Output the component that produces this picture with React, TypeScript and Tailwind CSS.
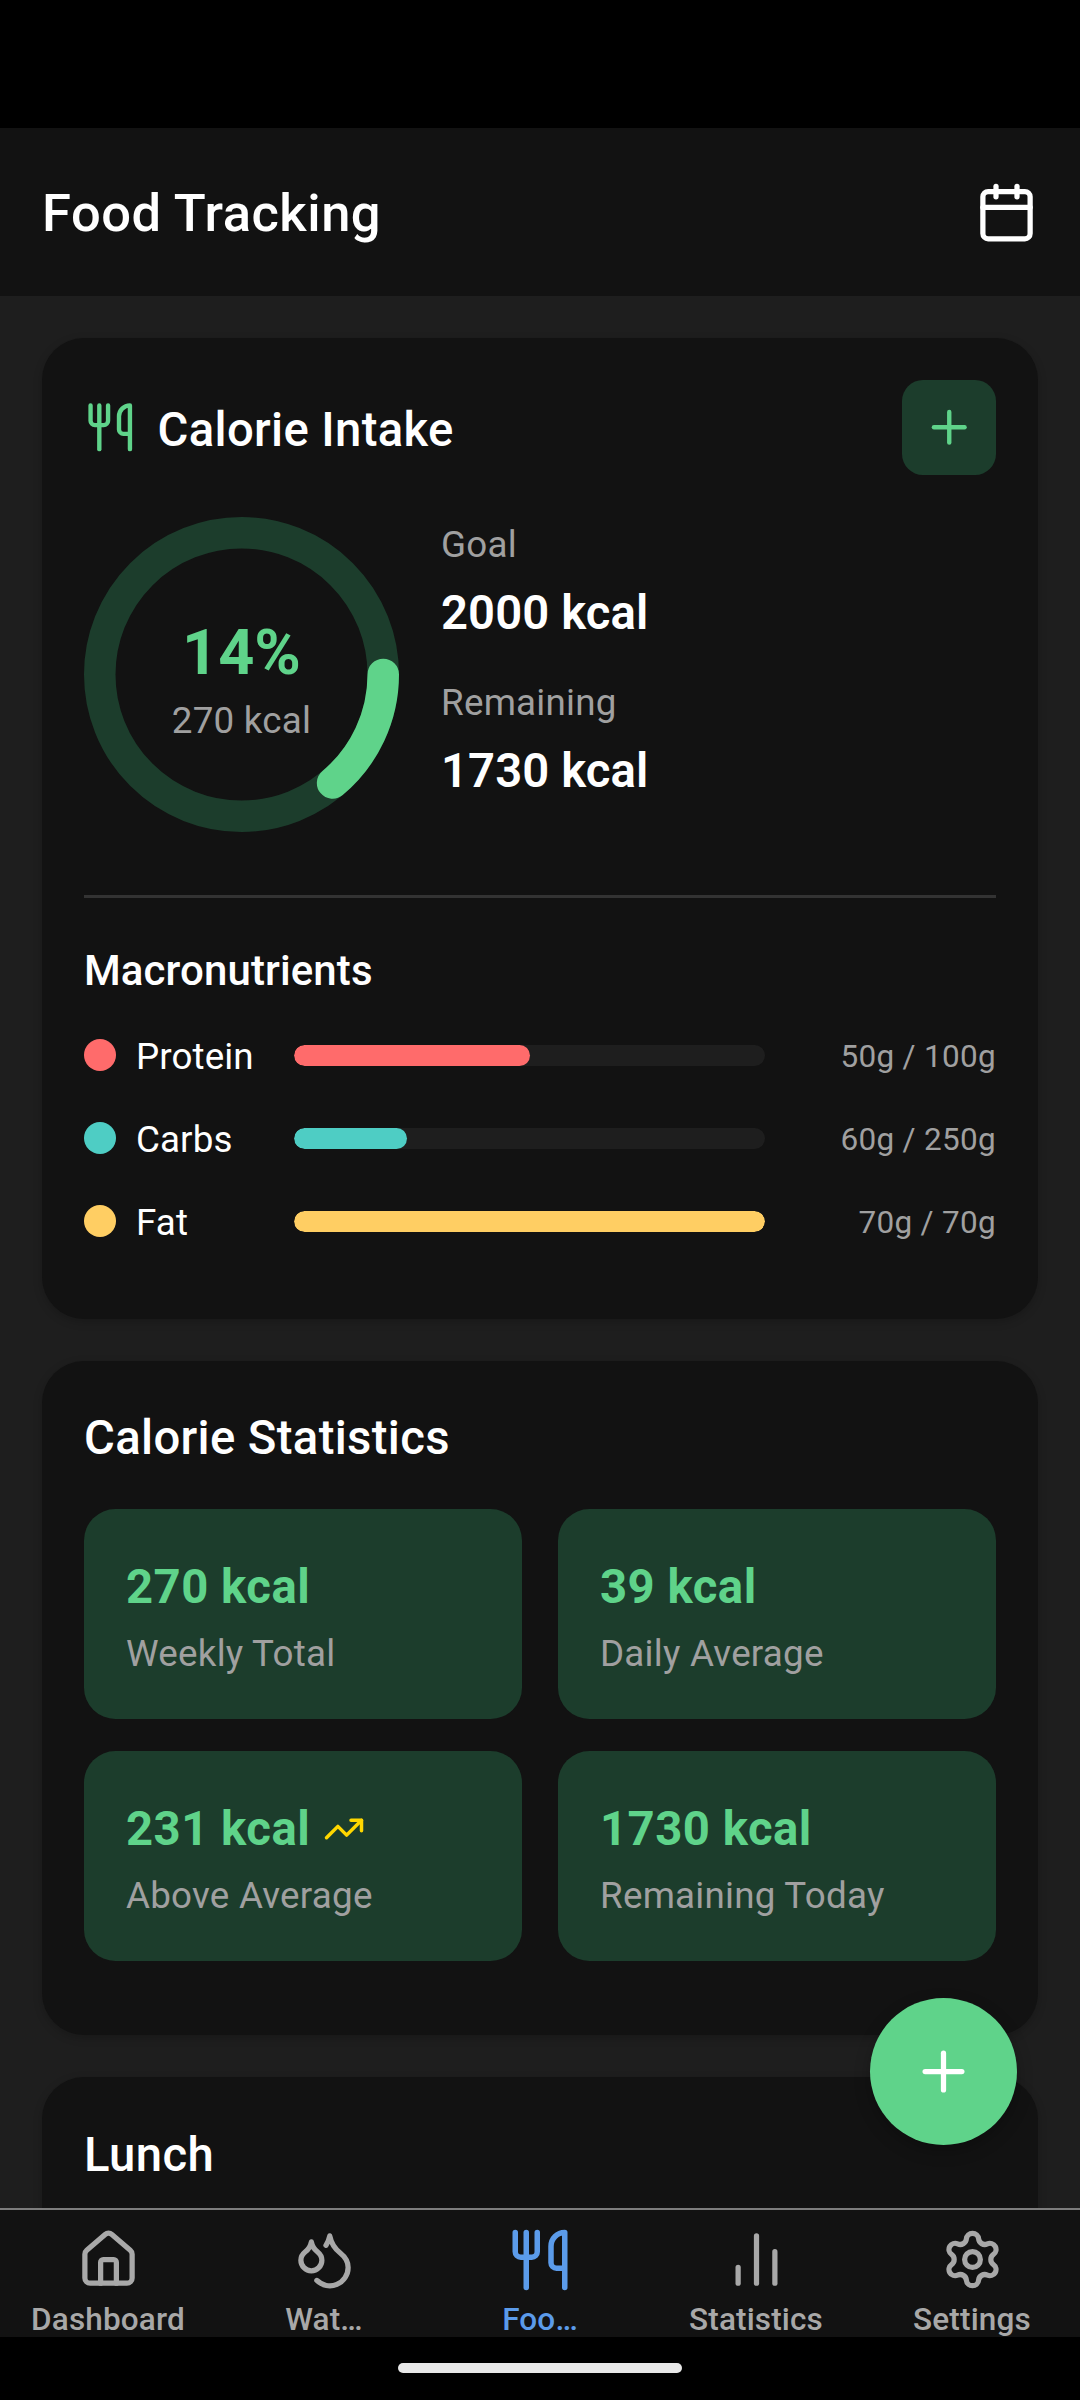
import { Calendar, ChartNoAxesColumn, Droplets, House, Plus, Settings, TrendingUp, Utensils } from "lucide-react";

const macros = [
  { name: "Protein", dot: "bg-[#ff6b6b]", width: "w-[50%]", value: "50g / 100g" },
  { name: "Carbs", dot: "bg-[#4ecdc4]", width: "w-[24%]", value: "60g / 250g" },
  { name: "Fat", dot: "bg-[#ffce63]", width: "w-full", value: "70g / 70g" },
];

const stats = [
  { value: "270 kcal", label: "Weekly Total" },
  { value: "39 kcal", label: "Daily Average" },
  { value: "231 kcal", label: "Above Average", trend: true },
  { value: "1730 kcal", label: "Remaining Today" },
];

const tabs = [
  { label: "Dashboard", Icon: House },
  { label: "Wat…", Icon: Droplets },
  { label: "Foo…", Icon: Utensils, active: true },
  { label: "Statistics", Icon: ChartNoAxesColumn },
  { label: "Settings", Icon: Settings },
];

function Ring() {
  return (
    <div className="relative h-[315px] w-[315px] shrink-0">
      <svg width="315" height="315" viewBox="0 0 315 315" className="block">
        <circle cx="157.5" cy="157.5" r="141.75" fill="none" stroke="#1c3d2c" strokeWidth="31.5" />
        <path
          d="M299.25 157.5 A141.75 141.75 0 0 1 248.6 266"
          fill="none"
          stroke="#5fd38a"
          strokeWidth="31.5"
          strokeLinecap="round"
        />
      </svg>
      <div className="absolute inset-0 flex flex-col items-center justify-center pt-[9px]">
        <span className="text-[63px] leading-[74px] font-bold text-[#5fd38a]">14%</span>
        <span className="mt-[9px] text-[36.75px] leading-[43px] tracking-[0.25px] text-[#a0a0a0]">270 kcal</span>
      </div>
    </div>
  );
}

export default function App() {
  return (
    <div className="relative flex h-[2400px] w-[1080px] flex-col overflow-hidden bg-black font-['Roboto',sans-serif] text-white">
      <div className="h-[128px] shrink-0 bg-black" />
      <header className="flex h-[168px] shrink-0 items-center justify-between bg-[#121212] px-[42px]">
        <h1 className="pt-[2px] text-[52.5px] leading-[62px] font-medium tracking-[0.5px]">Food Tracking</h1>
        <Calendar size={63} strokeWidth={2} color="#ffffff" />
      </header>

      <main className="min-h-0 flex-1 overflow-hidden bg-[#1e1e1e] p-[42px]">
        <section className="mb-[42px] rounded-[42px] bg-[#121212] p-[42px] shadow-[0_3px_10px_rgba(0,0,0,0.2)]">
          <div className="flex h-[95px] items-center justify-between">
            <div className="flex items-center gap-[21px]">
              <Utensils size={52.5} strokeWidth={2} color="#5fd38a" />
              <h2 className="pt-[4px] text-[47.25px] leading-[56px] font-medium tracking-[0.35px]">Calorie Intake</h2>
            </div>
            <button className="flex h-[95px] w-[94px] items-center justify-center rounded-[21px] bg-[#1c3d2c]">
              <Plus size={52.5} strokeWidth={2} color="#5fd38a" />
            </button>
          </div>

          <div className="mt-[42px] flex items-start gap-[42px]">
            <Ring />
            <div className="mt-[6px] flex flex-col">
              <span className="text-[36.75px] leading-[43px] tracking-[0.25px] text-[#a0a0a0]">Goal</span>
              <span className="mt-[18.5px] text-[47.25px] leading-[56px] font-semibold tracking-[0.1px]">2000 kcal</span>
              <span className="mt-[40.5px] text-[36.75px] leading-[43px] tracking-[0.25px] text-[#a0a0a0]">Remaining</span>
              <span className="mt-[18.5px] text-[47.25px] leading-[56px] font-semibold tracking-[0.1px]">1730 kcal</span>
            </div>
          </div>

          <div className="mt-[63px] h-[3px] bg-[#333333]" />

          <h3 className="mt-[48px] text-[42px] leading-[50px] font-medium tracking-[0.1px]">Macronutrients</h3>
          <div className="mt-[39px] flex flex-col gap-[40px]">
            {macros.map((m) => (
              <div key={m.name} className="flex h-[43px] items-center">
                <div className="flex w-[210px] shrink-0 items-center gap-[20px]">
                  <span className={`mb-[3px] h-[32px] w-[32px] rounded-full ${m.dot}`} />
                  <span className="text-[36.75px] leading-[43px] tracking-[0.1px] text-white">{m.name}</span>
                </div>
                <div className="mb-[3px] h-[21px] flex-1 overflow-hidden rounded-[10.5px] bg-[#1e1e1e]">
                  <div className={`h-full rounded-[10.5px] ${m.dot} ${m.width}`} />
                </div>
                <span className="w-[231px] shrink-0 text-right text-[31.5px] leading-[37px] tracking-[0.3px] text-[#a0a0a0]">
                  {m.value}
                </span>
              </div>
            ))}
          </div>
          <div className="h-[33px]" />
        </section>

        <section className="mb-[42px] rounded-[42px] bg-[#121212] p-[42px] shadow-[0_3px_10px_rgba(0,0,0,0.2)]">
          <h2 className="text-[47.25px] leading-[70px] font-medium tracking-[0.35px]">Calorie Statistics</h2>
          <div className="mt-[36px] grid grid-cols-2 gap-x-[36px]">
            {stats.map((s) => (
              <div key={s.label} className="mb-[32px] flex h-[210px] flex-col justify-center rounded-[31.5px] bg-[#1c3d2c] px-[42px] pt-[6px]">
                <div className="flex items-center gap-[13px]">
                  <span className="text-[47.25px] leading-[56px] font-bold tracking-[0.5px] text-[#5fd38a]">{s.value}</span>
                  {s.trend && <TrendingUp size={42} strokeWidth={2} color="#ffd700" />}
                </div>
                <span className="mt-[17px] text-[36.75px] leading-[43px] tracking-[0.25px] text-[#a0a0a0]">{s.label}</span>
              </div>
            ))}
          </div>
        </section>

        <section className="h-[400px] rounded-[42px] bg-[#121212] p-[42px] shadow-[0_3px_10px_rgba(0,0,0,0.2)]">
          <h2 className="text-[47.25px] leading-[73px] font-medium tracking-[0.35px]">Lunch</h2>
        </section>
      </main>

      <button className="absolute top-[1998px] right-[63px] flex h-[147px] w-[147px] items-center justify-center rounded-full bg-[#5fd38a] shadow-[0_6px_16px_rgba(0,0,0,0.25)]">
        <Plus size={63} strokeWidth={2} color="#ffffff" />
      </button>

      <nav className="flex h-[129px] shrink-0 border-t-2 border-[#7d7d7d] bg-[#121212]">
        {tabs.map(({ label, Icon, active }) => (
          <div key={label} className="flex w-[216px] flex-col items-center pt-[18px]">
            <div className="flex h-[63px] items-center justify-center">
              <Icon size={active ? 66 : 63} strokeWidth={2} color={active ? "#5b9bea" : "#a8a8a8"} />
            </div>
            <span className={`mt-[10px] text-[31.5px] leading-[37px] font-medium tracking-[0.15px] ${active ? "text-[#5b9bea]" : "text-[#a8a8a8]"}`}>
              {label}
            </span>
          </div>
        ))}
      </nav>

      <div className="flex h-[63px] shrink-0 justify-center bg-black pt-[26px]">
        <div className="h-[10px] w-[284px] rounded-full bg-[#e8e8e8]" />
      </div>
    </div>
  );
}
